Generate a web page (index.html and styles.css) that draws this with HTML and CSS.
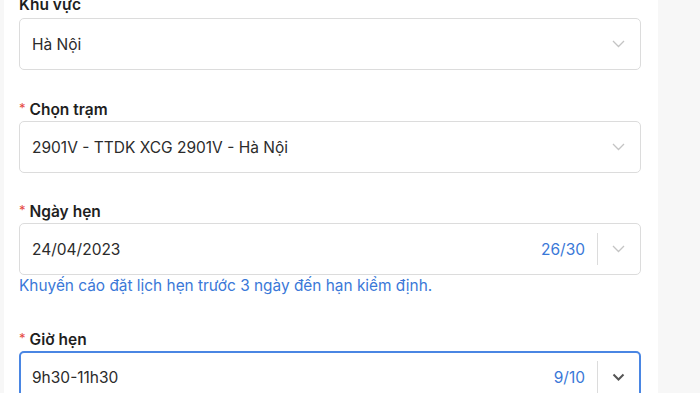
FILE: index.html
```html
<!DOCTYPE html>
<html lang="vi">
<head>
  <meta charset="UTF-8">
  <meta name="viewport" content="width=device-width, initial-scale=1.0">
  <title>Đặt lịch đăng kiểm</title>
  <link rel="stylesheet" href="styles.css">
</head>
<body>
  <div class="page">
    <div class="panel">
      <form class="form">

        <!-- Khu vực -->
        <div class="item">
          <div class="label">Khu vực</div>
          <div class="select">
            <span class="value">Hà Nội</span>
            <span class="arrow">
              <svg width="13" height="8" viewBox="0 0 13 8"><path d="M1 1l5.5 5.5L12 1" fill="none" stroke="#c4c4c4" stroke-width="1.3"/></svg>
            </span>
          </div>
        </div>

        <!-- Chọn trạm -->
        <div class="item item-tight">
          <div class="label"><span class="req">*</span>Chọn trạm</div>
          <div class="select">
            <span class="value">2901V - TTDK XCG 2901V - Hà Nội</span>
            <span class="arrow">
              <svg width="13" height="8" viewBox="0 0 13 8"><path d="M1 1l5.5 5.5L12 1" fill="none" stroke="#c4c4c4" stroke-width="1.3"/></svg>
            </span>
          </div>
        </div>

        <!-- Ngày hẹn -->
        <div class="item item-help">
          <div class="label"><span class="req">*</span>Ngày hẹn</div>
          <div class="select">
            <span class="value">24/04/2023</span>
            <span class="count">26/30</span>
            <span class="divider"></span>
            <span class="arrow arrow-split">
              <svg width="13" height="8" viewBox="0 0 13 8"><path d="M1 1l5.5 5.5L12 1" fill="none" stroke="#c4c4c4" stroke-width="1.3"/></svg>
            </span>
          </div>
          <div class="help">Khuyến cáo đặt lịch hẹn trước 3 ngày đến hạn kiểm định.</div>
        </div>

        <!-- Giờ hẹn -->
        <div class="item">
          <div class="label"><span class="req">*</span>Giờ hẹn</div>
          <div class="select select-active">
            <span class="value">9h30-11h30</span>
            <span class="count">9/10</span>
            <span class="divider"></span>
            <span class="arrow arrow-split">
              <svg width="13" height="8" viewBox="0 0 13 8"><path d="M1.5 1.5l5 5 5-5" fill="none" stroke="#555" stroke-width="2"/></svg>
            </span>
          </div>
        </div>

      </form>
    </div>
    <div class="side"></div>
  </div>
</body>
</html>
```

FILE: styles.css
```css
body {
  margin: 0;
  font-family: Inter, "Noto Sans", Arial, sans-serif;
  background-color: #f7f7f7;
  overflow: hidden;
}
.page {
  display: flex;
  height: 393px;
  padding-left: 4px;
}
.panel {
  width: 654px;
  background-color: #fff;
  padding: 0 17px 0 15px;
  box-sizing: border-box;
}
.side {
  flex: 1;
}
.form {
  margin-top: -7px;
}
.item {
  margin-bottom: 26px;
}
.item-tight {
  margin-bottom: 25px;
}
.item-help {
  margin-bottom: 29px;
}
.label {
  height: 25px;
  line-height: 24px;
  font-size: 15.5px;
  font-weight: 600;
  color: #1f1f1f;
}
.req {
  color: #e5493f;
  font-size: 13px;
  font-weight: 400;
  margin-right: 4px;
  vertical-align: 2px;
}
.select {
  display: flex;
  align-items: center;
  height: 52px;
  border: 1px solid #dcdcdc;
  border-radius: 5px;
  padding-left: 12px;
  box-sizing: border-box;
  background: #fff;
}
.select-active {
  border: 2px solid #4a86e3;
  padding-left: 11px;
}
.value {
  flex: 1;
  font-size: 15.5px;
  color: #2b2b2b;
}
.count {
  font-size: 15.5px;
  color: #3a78d8;
  margin-right: 12px;
}
.divider {
  width: 1px;
  height: 32px;
  background: #dcdcdc;
}
.arrow {
  width: 40px;
  display: flex;
  justify-content: center;
  align-items: center;
  margin-right: 2px;
}
.select-active .arrow {
  margin-right: 1px;
}
.help {
  line-height: 22px;
  font-size: 15.4px;
  color: #3a78d8;
}
```
